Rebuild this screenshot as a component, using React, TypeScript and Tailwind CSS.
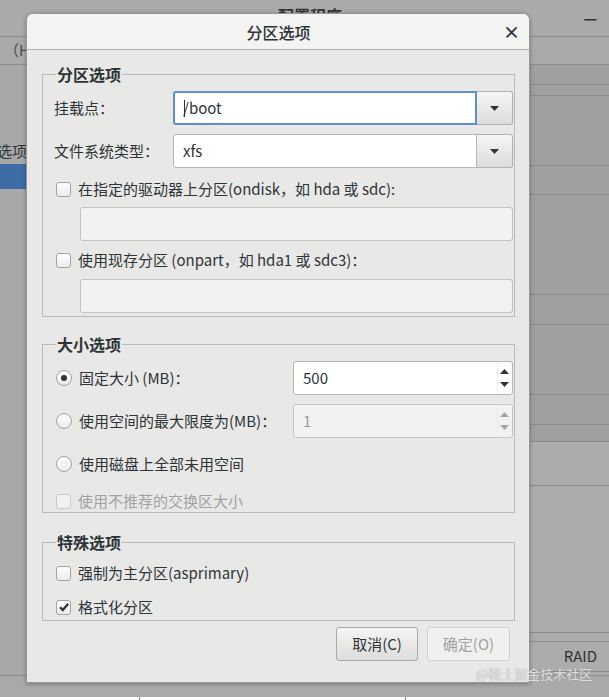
import React from 'react'

// 分区选项 dialog over an anaconda-like installer window

const font = "font-['Noto_Sans_CJK_SC','DejaVu_Sans',sans-serif]"

function TriDown({ color = '#2e3436' }: { color?: string }) {
  return (
    <svg width="9" height="5" viewBox="0 0 9 5">
      <polygon points="0,0 9,0 4.5,5" fill={color} />
    </svg>
  )
}

function TriUp({ color = '#2e3436' }: { color?: string }) {
  return (
    <svg width="9" height="5" viewBox="0 0 9 5">
      <polygon points="0,5 9,5 4.5,0" fill={color} />
    </svg>
  )
}

function Check({ checked = false, disabled = false }: { checked?: boolean; disabled?: boolean }) {
  return (
    <span
      className={
        'flex h-[15px] w-[15px] shrink-0 items-center justify-center rounded-[3px] border ' +
        (disabled
          ? 'border-[#c9c9c7] bg-[#f1f1f0]'
          : 'border-[#a2a2a0] bg-gradient-to-b from-[#ffffff] to-[#ebebea]')
      }
    >
      {checked && (
        <svg width="12" height="12" viewBox="0 0 12 12">
          <path d="M2 6.2 L4.8 9 L10.2 2.8" stroke="#2e3436" strokeWidth="2.3" fill="none" />
        </svg>
      )}
    </span>
  )
}

function Radio({ checked = false }: { checked?: boolean }) {
  return (
    <span className="flex h-[16px] w-[16px] shrink-0 items-center justify-center rounded-full border border-[#a2a2a0] bg-gradient-to-b from-[#ffffff] to-[#ebebea]">
      {checked && <span className="h-[6px] w-[6px] rounded-full bg-[#2e3436]" />}
    </span>
  )
}

function Legend({ children }: { children: React.ReactNode }) {
  return (
    <legend className="ml-[2px] px-[1px] text-[16px] font-bold leading-[22px] text-[#2e3436]">
      {children}
    </legend>
  )
}

function Combo({ value, focused = false }: { value: string; focused?: boolean }) {
  return (
    <div className="flex h-[34px] flex-1">
      <div
        className={
          'flex flex-1 items-center rounded-l-[3px] border bg-white pl-[9px] text-[15px] text-[#2e3436] ' +
          (focused ? 'border-[#5d90c9] border-2 pl-[8px]' : 'border-[#b5b5b3]')
        }
      >
        {focused && <span className="mr-[-2px] h-[17px] w-px bg-[#2e3436]" />}
        {value}
      </div>
      <div className="flex w-[36px] items-center justify-center rounded-r-[3px] border border-l-0 border-[#b1b1af] bg-gradient-to-b from-[#f6f6f5] to-[#dcdcda]">
        <TriDown />
      </div>
    </div>
  )
}

function Spin({ value, disabled = false }: { value: string; disabled?: boolean }) {
  const c = disabled ? '#a3a5a5' : '#2e3436'
  return (
    <div
      className={
        'flex h-[34px] w-[220px] rounded-[3px] border ' +
        (disabled ? 'border-[#c6c6c4] bg-[#f2f2f1]' : 'border-[#b5b5b3] bg-white')
      }
    >
      <div className={'flex flex-1 items-center pl-[9px] text-[15px] ' + (disabled ? 'text-[#9a9c9c]' : 'text-[#2e3436]')}>
        {value}
      </div>
      <div className="flex w-[15px] flex-col items-center justify-center gap-[8px] border-l border-[#ececeb] pr-[2px]">
        <TriUp color={c} />
        <TriDown color={c} />
      </div>
    </div>
  )
}

function Entry() {
  return <div className="ml-[26px] h-[34px] rounded-[3px] border border-[#c3c3c1] bg-[#f2f2f1]" />
}

function Dialog() {
  return (
    <div className="absolute left-[26px] top-[13px] flex h-[670px] w-[504px] flex-col overflow-hidden rounded-t-[7px] border border-[#979797] bg-[#e8e8e7] shadow-[0_1px_4px_rgba(0,0,0,0.3)]">
      <div className="relative flex h-[36px] shrink-0 items-center justify-center border-b border-[#b3b3b0] bg-[#f3f3f2]">
        <span className="pl-[1px] text-[16px] font-medium text-[#2e3436]">分区选项</span>
        <span className="absolute right-[9px] top-[8px] text-[17px] font-bold leading-[20px] text-[#2e3436]">×</span>
      </div>

      <div className="flex flex-1 flex-col pl-[15px] pr-[14px] pt-[13px] text-[15px] text-[#2e3436]">
        <fieldset className="border border-[#bababa] pb-[3px] pl-[11px] pr-[1px]">
          <Legend>分区选项</Legend>
          <div className="mt-[6px] flex items-center">
            <span className="w-[119px]">挂载点：</span>
            <Combo value="/boot" focused />
          </div>
          <div className="mt-[9px] flex items-center">
            <span className="w-[119px]">文件系统类型：</span>
            <Combo value="xfs" />
          </div>
          <div className="mt-[11px] flex h-[20px] items-center gap-[7px] pl-[2px]">
            <Check />
            <span>在指定的驱动器上分区(ondisk，如 hda 或 sdc):</span>
          </div>
          <div className="mt-[8px]">
            <Entry />
          </div>
          <div className="mt-[9px] flex h-[20px] items-center gap-[7px] pl-[2px]">
            <Check />
            <span>使用现存分区 (onpart，如 hda1 或 sdc3)：</span>
          </div>
          <div className="mt-[9px]">
            <Entry />
          </div>
        </fieldset>

        <fieldset className="mt-[16px] border border-[#bababa] pb-[1px] pl-[11px] pr-[1px]">
          <Legend>大小选项</Legend>
          <div className="mt-[6px] flex items-center justify-between">
            <div className="flex items-center gap-[7px] pl-[2px]">
              <Radio checked />
              <span>固定大小 (MB)：</span>
            </div>
            <Spin value="500" />
          </div>
          <div className="mt-[9px] flex items-center justify-between">
            <div className="flex items-center gap-[7px] pl-[2px]">
              <Radio />
              <span>使用空间的最大限度为(MB)：</span>
            </div>
            <Spin value="1" disabled />
          </div>
          <div className="mt-[16px] flex h-[20px] items-center gap-[7px] pl-[2px]">
            <Radio />
            <span>使用磁盘上全部未用空间</span>
          </div>
          <div className="mt-[17px] flex h-[20px] items-center gap-[7px] pl-[2px]">
            <Check disabled />
            <span className="text-[#a0a2a2]">使用不推荐的交换区大小</span>
          </div>
        </fieldset>

        <fieldset className="mt-[18px] border border-[#bababa] pb-[3px] pl-[11px] pr-[1px]">
          <Legend>特殊选项</Legend>
          <div className="mt-[10px] flex h-[20px] items-center gap-[7px] pl-[2px]">
            <Check />
            <span>强制为主分区(asprimary)</span>
          </div>
          <div className="mt-[14px] flex h-[20px] items-center gap-[7px] pl-[2px]">
            <Check checked />
            <span>格式化分区</span>
          </div>
        </fieldset>

        <div className="mr-[5px] mt-[6px] flex justify-end gap-[9px]">
          <button className="flex h-[34px] w-[82px] items-center justify-center rounded-[3px] border border-[#a9a9a7] bg-gradient-to-b from-[#f5f5f4] to-[#dddddb] text-[15px] text-[#2e3436]">
            取消(C)
          </button>
          <button className="flex h-[34px] w-[83px] items-center justify-center rounded-[3px] border border-[#cfcfcd] bg-[#f0f0ef] text-[15px] text-[#a0a2a2]">
            确定(O)
          </button>
        </div>
      </div>
    </div>
  )
}

// background window, mostly hidden by the dialog
const rightRows: { h: number; light?: boolean; label?: string }[] = [
  { h: 20 }, { h: 11 }, { h: 70 }, { h: 29 }, { h: 100 }, { h: 30 }, { h: 70 }, { h: 30 }, { h: 17 },
  { h: 44, light: true }, { h: 147, light: true }, { h: 9, light: true }, { h: 30, light: true, label: 'RAID' },
]

export default function App() {
  return (
    <div className={'relative h-[700px] w-[609px] overflow-hidden bg-[#a6a6a6] ' + font}>
      <div className="flex h-full flex-col">
        <div className="flex h-[37px] shrink-0 items-start border-b border-[#8d8d8d] bg-[#aaaaaa]">
          <span className="ml-[278px] mt-[3px] text-[16px] font-bold text-[#2e3436]">配置程序</span>
          <span className="ml-auto mr-[12px] mt-[7px] text-[15px] font-bold text-[#2e3436]">—</span>
        </div>
        <div className="flex h-[28px] shrink-0 items-center border-b border-[#8d8d8d] bg-[#a9a9a9] pl-[4px] text-[15px] text-[#4a4a4a]">
          （H
        </div>
        <div className="flex flex-1 border-b border-[#8d8d8d]">
          <div className="flex w-[27px] flex-col overflow-hidden bg-[#a8a8a8]">
            <div className="mt-[76px] flex h-[20px] justify-end whitespace-nowrap text-[15px] leading-[20px] text-[#2e3436]">
              选项
            </div>
            <div className="mt-[3px] h-[25px] bg-[#3d6ca7]" />
          </div>
          <div className="flex-1" />
          <div className="flex w-[80px] flex-col">
            {rightRows.map((r, i) => (
              <div
                key={i}
                style={{ height: r.h }}
                className={
                  'flex shrink-0 items-center justify-end border-b border-[#8b8b8b] pr-[12px] text-[15px] text-[#333] ' +
                  (r.light ? 'bg-[#acacac]' : 'bg-[#a0a0a0]')
                }
              >
                {r.label}
              </div>
            ))}
            <div className="flex-1 bg-[#acacac]" />
          </div>
        </div>
        <div className="h-[21px] shrink-0 bg-[#a9a9a9]" />
        <div className="flex h-[3px] shrink-0 bg-white">
          <div className="w-[140px] border-r border-[#888]" />
          <div className="w-[266px] border-r border-[#888]" />
          <div className="flex-1" />
        </div>
      </div>

      <Dialog />

      <div className="absolute left-[476px] top-[665px] text-[13px] leading-[17px] text-[#f4f4f4]/80 [text-shadow:0_0_1px_#8a8a8a]">
        @稀土掘金技术社区
      </div>
    </div>
  )
}
